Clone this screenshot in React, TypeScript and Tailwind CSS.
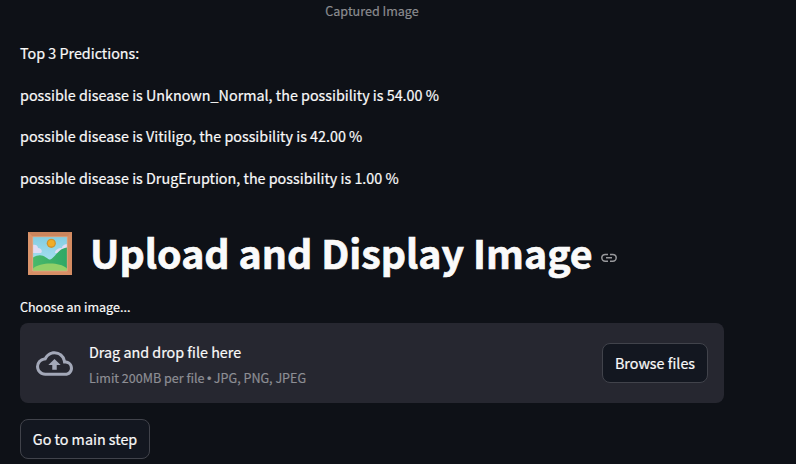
import React from "react";

const predictions = [
  { name: "Unknown_Normal", value: "54.00" },
  { name: "Vitiligo", value: "42.00" },
  { name: "DrugEruption", value: "1.00" },
];

function FramedPicture() {
  return (
    <svg className="h-[44px] w-[44px] shrink-0" viewBox="0 0 44 44">
      <defs>
        <linearGradient id="sky" x1="0" y1="0" x2="0" y2="1">
          <stop offset="0" stopColor="#83cde2" />
          <stop offset="1" stopColor="#b5e6f4" />
        </linearGradient>
        <linearGradient id="hill" x1="0" y1="0" x2="1" y2="0">
          <stop offset="0" stopColor="#4ab96a" />
          <stop offset="1" stopColor="#2fa866" />
        </linearGradient>
        <clipPath id="canvas"><path d="M5 5h34v34H5z" /></clipPath>
      </defs>
      <path d="M0 0h44v43H0z" fill="#d48c62" />
      <path d="M0 0h44l-5 5H5z" fill="#cb855d" />
      <path d="M0 0l5 5v34l-5 4z" fill="#d9946b" />
      <path d="M0 43l5-4h34l5 4z" fill="#d88f66" />
      <g clipPath="url(#canvas)">
        <path d="M5 5h34v34H5z" fill="url(#sky)" />
        <path d="M4 13c3-1 6 0 6 3 3 0 5 3 3 5H4zM40 12c-4 0-6 2-6 4-4 0-7 2-7 5h13z" fill="#e0dcf4" />
        <circle cx="23.3" cy="11.3" r="4.6" fill="#cf932e" />
        <circle cx="23.3" cy="11.3" r="3.3" fill="#f2ad27" />
        <path d="M5 25.500c5-3 9-3 13 0 3 2 4 3 6 1 5-4 7-10 15-11v23H5z" fill="url(#hill)" />
        <path d="M5 36.500c7-6 26-7 34 0v3H5z" fill="#91d068" />
      </g>
      <path d="M4.700 4.700h34.600v34.300H4.700z" fill="none" stroke="#dfad8a" strokeWidth=".7" />
    </svg>
  );
}

export default function App() {
  return (
    <main className="h-[464px] w-full overflow-hidden bg-[#0e1117] pl-5 font-['Noto_Sans_CJK_SC',sans-serif] text-[14.33px] text-[#fafafa] [-webkit-text-stroke:0.2px]">
      <div className="flex w-[704px] flex-col">
        <p className="h-[22px] text-center text-[12.55px] leading-[22px] text-[#8b8c90]">Captured Image</p>
        <div className="mt-[18px] flex flex-col gap-4 leading-[25.6px]">
          <p>Top 3 Predictions:</p>
          {predictions.map((p) => (
            <p key={p.name}>possible disease is {p.name}, the possibility is {p.value} %</p>
          ))}
        </div>
        <div className="mt-9 flex h-[53px] items-center">
          <div className="ml-2 mt-[2px]"><FramedPicture /></div>
          <h1 className="mb-[2px] ml-[18px] whitespace-nowrap text-[39.3px] font-bold leading-[53px] [-webkit-text-stroke:0.7px]">Upload and Display Image</h1>
          <svg className="ml-2 mt-[10px] h-4 w-4 shrink-0" viewBox="0 0 16 16" fill="none" stroke="#97989b" strokeWidth="1.5">
            <path d="M7 4.400H4.200a3.400 3.400 0 0 0 0 6.800H7M9 4.400h2.800a3.400 3.400 0 0 1 0 6.800H9M5 7.800h6" />
          </svg>
        </div>
        <label className="mt-[17px] h-[22px] text-[12.55px] leading-[22px]">Choose an image...</label>
        <section className="mt-[5px] flex h-20 items-center rounded-lg bg-[#262730] px-4">
          <svg className="h-[37px] w-[37px] shrink-0" viewBox="0 0 24 24" fill="#a3a8b8">
            <path d="M19.35 10.04A7.49 7.49 0 0 0 12 4C9.11 4 6.6 5.64 5.35 8.04A5.994 5.994 0 0 0 0 14c0 3.31 2.69 6 6 6h13c2.76 0 5-2.24 5-5 0-2.64-2.05-4.78-4.65-4.96zM19 18H6c-2.21 0-4-1.79-4-4 0-2.05 1.53-3.76 3.56-3.97l1.07-.11.5-.95A5.469 5.469 0 0 1 12 6c2.62 0 4.88 1.86 5.39 4.43l.3 1.5 1.53.11A2.98 2.98 0 0 1 22 15c0 1.65-1.35 3-3 3zM8 13h2.55v3h2.9v-3H16l-4-4z" />
          </svg>
          <div className="ml-4 flex flex-1 flex-col pt-[2px]">
            <span className="leading-[26px]">Drag and drop file here</span>
            <small className="mt-[2px] h-[22px] whitespace-nowrap text-[12.55px] leading-[22px] text-[#8d8e94]">Limit 200MB per file<span className="-mx-px font-['Liberation_Sans'] leading-none"> • </span>JPG, PNG, JPEG</small>
          </div>
          <button className="h-10 w-[106px] rounded-lg border border-[#41434b] bg-[#131720] leading-[26px]">Browse files</button>
        </section>
        <button className="mt-4 h-10 w-[130px] rounded-lg border border-[#41434b] bg-[#131720] leading-[26px]">Go to main step</button>
      </div>
    </main>
  );
}
